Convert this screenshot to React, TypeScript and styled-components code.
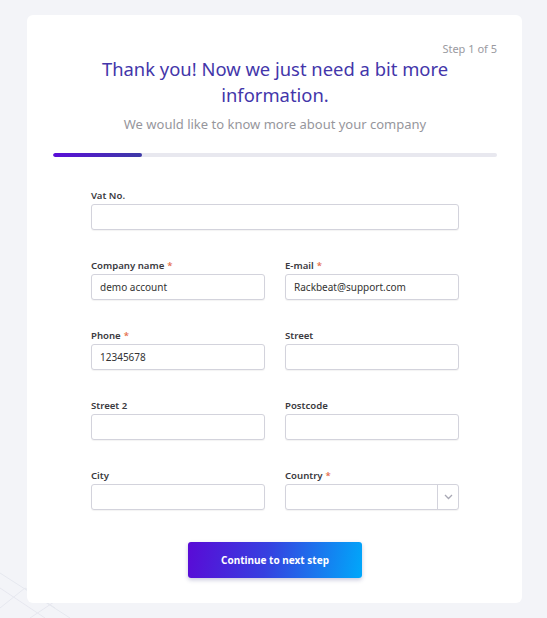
import React from "react";
import styled, { createGlobalStyle } from "styled-components";

const Global = createGlobalStyle`
  html, body { margin: 0; padding: 0; }
  body {
    background: #f3f4f8;
    font-family: "Noto Sans", "Open Sans", "Liberation Sans", sans-serif;
    color: #333;
    min-height: 618px;
    overflow: hidden;
  }
  * { box-sizing: border-box; }
`;

const Page = styled.div`
  position: relative;
  min-height: 618px;
  padding: 15px 25px 0 27px;
`;

const Decor = styled.svg`
  position: absolute;
  left: 0;
  bottom: 0;
  width: 120px;
  height: 120px;
  pointer-events: none;
`;

const Card = styled.div`
  position: relative;
  width: 495px;
  height: 588px;
  background: #fff;
  border-radius: 6px;
  padding: 27px 25px 0 26px;
  display: flex;
  flex-direction: column;
`;

const StepText = styled.div`
  align-self: flex-end;
  font-size: 11px;
  line-height: 14px;
  color: #9a9a9f;
`;

const Title = styled.h1`
  margin: 0;
  font-size: 18.4px;
  line-height: 26px;
  font-weight: 400;
  color: #4336aa;
  text-align: center;
  padding: 0 40px;
`;

const Subtitle = styled.p`
  margin: 7px 0 0;
  font-size: 13px;
  line-height: 18px;
  color: #96969c;
  text-align: center;
`;

const Track = styled.div`
  margin-top: 20px;
  height: 4px;
  border-radius: 2px;
  background: #e8e8ef;
  overflow: hidden;
`;

const Fill = styled.div`
  height: 100%;
  border-radius: 2px;
  background: linear-gradient(90deg, #5a0ed8, #3d3aa6);
`;

const Form = styled.form`
  margin-top: 32px;
  padding: 0 38px;
  display: grid;
  grid-template-columns: 1fr 1fr;
  column-gap: 20px;
  row-gap: 29px;
`;

const Field = styled.div<{ $full?: boolean }>`
  grid-column: ${(p) => (p.$full ? "1 / -1" : "auto")};
  display: flex;
  flex-direction: column;
`;

const Label = styled.label`
  font-size: 9.6px;
  line-height: 14px;
  font-weight: 600;
  color: #3a3a40;
  margin-bottom: 1px;
`;

const Req = styled.span`
  color: #e5704f;
  margin-left: 3px;
`;

const Input = styled.input`
  height: 26px;
  border: 1px solid #d3d3dc;
  border-radius: 3px;
  box-shadow: 0 1px 1px rgba(0, 0, 0, 0.05);
  padding: 0 8px;
  font-family: inherit;
  font-size: 10px;
  color: #333;
  background: #fff;
  outline: none;
`;

const SelectBox = styled.div`
  height: 26px;
  border: 1px solid #d3d3dc;
  border-radius: 3px;
  box-shadow: 0 1px 1px rgba(0, 0, 0, 0.05);
  display: flex;
  background: #fff;
`;

const SelectValue = styled.div`
  flex: 1;
`;

const SelectArrow = styled.div`
  width: 21px;
  border-left: 1px solid #d3d3dc;
  display: flex;
  align-items: center;
  justify-content: center;
`;

const ButtonRow = styled.div`
  display: flex;
  justify-content: center;
  margin-top: 32px;
`;

const Button = styled.button`
  width: 174px;
  height: 36px;
  border: none;
  border-radius: 3px;
  background: linear-gradient(100deg, #5a0ad6 0%, #3640e0 45%, #00a8fa 100%);
  box-shadow: 0 2px 4px rgba(40, 40, 120, 0.25);
  color: #fff;
  font-family: inherit;
  font-size: 10px;
  font-weight: 700;
`;

export default function App() {
  return (
    <>
      <Global />
      <Page>
        <Decor viewBox="0 0 120 120">
          <g stroke="#e6e8ef" strokeWidth="1" fill="none">
            <path d="M0 75 L70 120" />
            <path d="M0 90 L45 120" />
            <path d="M0 110 L25 90 L55 110" />
            <path d="M30 120 L60 100" />
          </g>
        </Decor>
        <Card>
          <StepText>Step 1 of 5</StepText>
          <Title>Thank you! Now we just need a bit more information.</Title>
          <Subtitle>We would like to know more about your company</Subtitle>
          <Track>
            <Fill style={{ width: "20%" }} />
          </Track>
          <Form>
            <Field $full>
              <Label>Vat No.</Label>
              <Input />
            </Field>
            <Field>
              <Label>
                Company name<Req>*</Req>
              </Label>
              <Input defaultValue="demo account" />
            </Field>
            <Field>
              <Label>
                E-mail<Req>*</Req>
              </Label>
              <Input defaultValue="Rackbeat@support.com" />
            </Field>
            <Field>
              <Label>
                Phone<Req>*</Req>
              </Label>
              <Input defaultValue="12345678" />
            </Field>
            <Field>
              <Label>Street</Label>
              <Input />
            </Field>
            <Field>
              <Label>Street 2</Label>
              <Input />
            </Field>
            <Field>
              <Label>Postcode</Label>
              <Input />
            </Field>
            <Field>
              <Label>City</Label>
              <Input />
            </Field>
            <Field>
              <Label>
                Country<Req>*</Req>
              </Label>
              <SelectBox>
                <SelectValue />
                <SelectArrow>
                  <svg width="9" height="6" viewBox="0 0 9 6">
                    <path d="M1 1 L4.5 4.5 L8 1" stroke="#a8a8b4" strokeWidth="1.3" fill="none" />
                  </svg>
                </SelectArrow>
              </SelectBox>
            </Field>
          </Form>
          <ButtonRow>
            <Button type="button">Continue to next step</Button>
          </ButtonRow>
        </Card>
      </Page>
    </>
  );
}
